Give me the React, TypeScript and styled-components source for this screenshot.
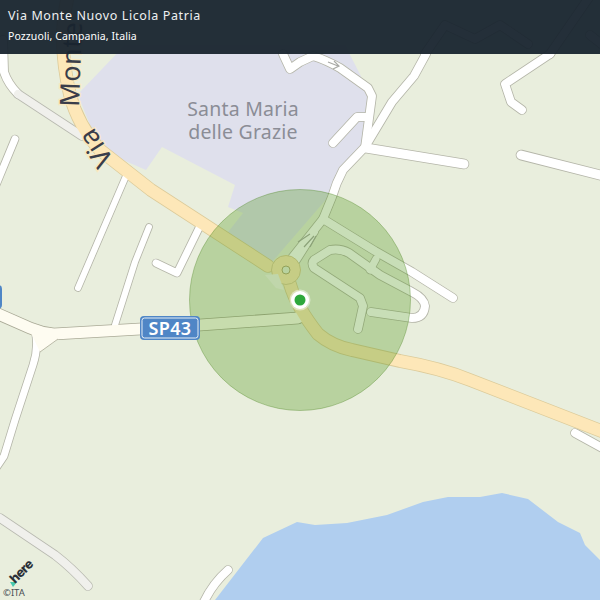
import styled, { createGlobalStyle } from "styled-components";

type Tone = "white" | "grey" | "cream" | "main";

type RoadProps = {
  d: string;
  width: number;
  tone: Tone;
};

const tones = {
  white: { fill: "#ffffff", edge: "#b4b5a8" },
  grey: { fill: "#f0f0ec", edge: "#b8b9b0" },
  cream: { fill: "#fefcf1", edge: "#a9a996" },
  main: { fill: "#fde7b8", edge: "#dccb9a" },
};

const roads: RoadProps[] = [
  { d: "M3 40 L4 72 Q8 84 18 94", width: 8, tone: "white" },
  { d: "M18 94 L82 136", width: 8, tone: "grey" },
  { d: "M15 139 L-4 185", width: 7, tone: "white" },
  { d: "M126 176 L78 288", width: 6, tone: "white" },
  { d: "M149 227 L135 262 L115 325", width: 6, tone: "white" },
  { d: "M156 263 L177 273 L200 226", width: 7, tone: "white" },
  { d: "M0 518 L55 555 Q72 568 88 586", width: 8, tone: "grey" },
  { d: "M228 570 Q212 584 203 604", width: 8, tone: "white" },
  { d: "M36 336 Q38 350 33 365 L15 420 L4 456 L-4 468", width: 7, tone: "white" },
  { d: "M-4 313 L30 328 Q42 333 54 334 L140 329 L200 325 L298 318", width: 11, tone: "cream" },
  { d: "M575 433 L604 449", width: 8, tone: "white" },
  { d: "M283 54 L290 69 L300 62 L313 56 Q326 60 340 68 L368 88 L372 96 L365 148", width: 8, tone: "white" },
  { d: "M333 143 L357 117 L366 117", width: 8, tone: "white" },
  { d: "M366 148 L464 164", width: 9, tone: "white" },
  { d: "M521 155 L604 176", width: 9, tone: "white" },
  { d: "M550 54 L505 84 L511 102 L522 110", width: 8, tone: "white" },
  { d: "M550 54 L590 -4", width: 8, tone: "white" },
  { d: "M590 35 L604 46", width: 8, tone: "white" },
  { d: "M425 54 L445 25 L475 39 L500 25 L528 44", width: 8, tone: "white" },
  { d: "M426 54 L414 76 L392 102 L365 147 L343 170 Q336 183 332 197 L323 219 L292 258", width: 8, tone: "white" },
  { d: "M315 232 L296 262", width: 6, tone: "white" },
  { d: "M323 219 L375 251 L412 272 L453 298", width: 8, tone: "white" },
  { d: "M358 329 L363 306 L360 298 L314 268 Q311 263 314 260 L330 250 Q340 248 349 253 L380 275 L412 292 Q424 298 425 306 Q424 318 412 318 L371 312", width: 8, tone: "white" },
  { d: "M376 259 L370 270", width: 7, tone: "white" },
  { d: "M68 -4 Q57 40 70 95 Q78 125 100 150 L151 190 L268 266", width: 12, tone: "main" },
  { d: "M290 284 Q296 306 318 334 Q332 346 352 350 L400 361 Q440 368 470 380 L604 432", width: 12, tone: "main" },
];

function Road({ d, width, tone }: RoadProps) {
  return <Casing d={d} $width={width + 1.6} $tone={tone} />;
}

function RoadFill({ d, width, tone }: RoadProps) {
  return <Tarmac d={d} $width={width} $tone={tone} />;
}

export default function App() {
  return (
    <>
      <GlobalStyle />
      <MapFrame>
        <MapCanvas viewBox="0 0 600 600" xmlns="http://www.w3.org/2000/svg">
          <polygon
            fill="#b0ceef"
            points="215,600 263,538 297,522 315,525 347,523 387,515 423,502 448,497 480,497 502,493 528,499 558,522 580,533 585,545 600,560 600,600"
          />
          <polygon
            fill="#dfe0ec"
            points="125,45 80,92 80,100 100,150 146,170 162,147 235,185 228,207 243,213 228,232 272,262 330,195 362,145 368,90 345,45"
          />

          {roads.map((road) => (
            <Road key={road.d} {...road} />
          ))}
          {roads.map((road) => (
            <RoadFill key={road.d} {...road} />
          ))}

          <polygon fill="#fefcf1" points="31,333 60,338 40,352" />
          <IslandEdge d="M58 339 L40 352" />
          <circle cx="286" cy="270" r="14.5" fill="#fde7b8" stroke="#dccb9a" />
          <circle cx="286" cy="270" r="4" fill="#e9eedd" stroke="#b4a878" />
          <polygon fill="#f4f4ee" points="265,275 278,274 284,290 276,288" />
          <ArrowMark d="M328 62 L338 66 M334 61 L339 66 L333 69" />
          <ArrowMark d="M298 242 L310 234 M304 247 L314 236 M310 247 L316 236" />

          <Accuracy cx="300" cy="300" r="110.5" />

          <ShieldOuter x="-12" y="285" width="14" height="24" rx="4" />
          <ShieldOuter x="140" y="316" width="60" height="24" rx="4" />
          <ShieldInner x="142" y="318" width="56" height="20" rx="2.5" />
          <ShieldLabel x="170" y="334.5">SP43</ShieldLabel>

          <RoadLabel transform="translate(79 107) rotate(-88)">Monte</RoadLabel>
          <RoadLabel transform="translate(114 160) rotate(-122)">Via</RoadLabel>

          <AreaLabel>
            <tspan x="243" y="116">Santa Maria</tspan>
            <tspan x="243" y="139">delle Grazie</tspan>
          </AreaLabel>

          <circle cx="300" cy="300" r="10.5" fill="#ffffff" opacity="0.45" />
          <circle cx="300" cy="300" r="9" fill="#ffffff" />
          <circle cx="300" cy="300" r="5.5" fill="#2ea83b" />

          <polygon fill="#48c8b0" points="10,582 17,582 13,587" />
          <LogoLabel transform="translate(15 584) rotate(-45)">here</LogoLabel>
          <CopyLabel x="3" y="596">©ITA</CopyLabel>
        </MapCanvas>

        <Header>
          <Street>Via Monte Nuovo Licola Patria</Street>
          <Place>Pozzuoli, Campania, Italia</Place>
        </Header>
      </MapFrame>
    </>
  );
}

const GlobalStyle = createGlobalStyle`
  html, body {
    margin: 0;
    padding: 0;
    background: #e9eedd;
  }
`;

const MapFrame = styled.main`
  position: relative;
  width: 600px;
  height: 600px;
  overflow: hidden;
  background: #e9eedd;
  font-family: "Noto Sans", "Open Sans", sans-serif;
`;

const MapCanvas = styled.svg`
  display: block;
  width: 600px;
  height: 600px;
`;

const Casing = styled.path<{ $width: number; $tone: Tone }>`
  fill: none;
  stroke: ${(p) => tones[p.$tone].edge};
  stroke-width: ${(p) => p.$width}px;
  stroke-linecap: round;
  stroke-linejoin: round;
`;

const Tarmac = styled.path<{ $width: number; $tone: Tone }>`
  fill: none;
  stroke: ${(p) => tones[p.$tone].fill};
  stroke-width: ${(p) => p.$width}px;
  stroke-linecap: round;
  stroke-linejoin: round;
`;

const IslandEdge = styled.path`
  fill: none;
  stroke: #a9a996;
  stroke-width: 0.8px;
`;

const ArrowMark = styled.path`
  fill: none;
  stroke: #a9aaa6;
  stroke-width: 1.2px;
`;

const Accuracy = styled.circle`
  fill: rgba(73, 145, 18, 0.3);
  stroke: rgba(73, 130, 30, 0.35);
  stroke-width: 1px;
`;

const ShieldOuter = styled.rect`
  fill: #4f86c6;
`;

const ShieldInner = styled.rect`
  fill: #4f86c6;
  stroke: #e6eef6;
  stroke-width: 1px;
`;

const ShieldLabel = styled.text`
  fill: #ffffff;
  font-family: "Noto Sans", sans-serif;
  font-size: 18px;
  font-weight: 600;
  letter-spacing: 0.4px;
  text-anchor: middle;
`;

const RoadLabel = styled.text`
  fill: #3a3d4a;
  font-family: "Noto Sans", sans-serif;
  font-size: 27px;
  letter-spacing: 0.5px;
  paint-order: stroke;
  stroke: rgba(253, 232, 185, 0.8);
  stroke-width: 3px;
`;

const AreaLabel = styled.text`
  fill: #8b8d96;
  font-family: "Noto Sans", sans-serif;
  font-size: 19.5px;
  letter-spacing: 0.2px;
  text-anchor: middle;
`;

const LogoLabel = styled.text`
  fill: #2b3038;
  font-family: Inter, "Noto Sans", sans-serif;
  font-size: 13px;
  font-weight: 800;
  letter-spacing: -0.6px;
`;

const CopyLabel = styled.text`
  fill: #4a4f55;
  font-family: "Noto Sans", sans-serif;
  font-size: 9.5px;
`;

const Header = styled.header`
  position: absolute;
  top: 0;
  left: 0;
  right: 0;
  height: 54px;
  box-sizing: border-box;
  padding: 8px 8px 0;
  display: flex;
  flex-direction: column;
  gap: 5px;
  background: rgba(24, 36, 46, 0.95);
  color: #ffffff;
`;

const Street = styled.div`
  font-size: 12.5px;
  line-height: 16px;
  letter-spacing: 0.6px;
  color: #eef0f1;
`;

const Place = styled.div`
  font-size: 10.5px;
  line-height: 14px;
  letter-spacing: 0.1px;
`;
